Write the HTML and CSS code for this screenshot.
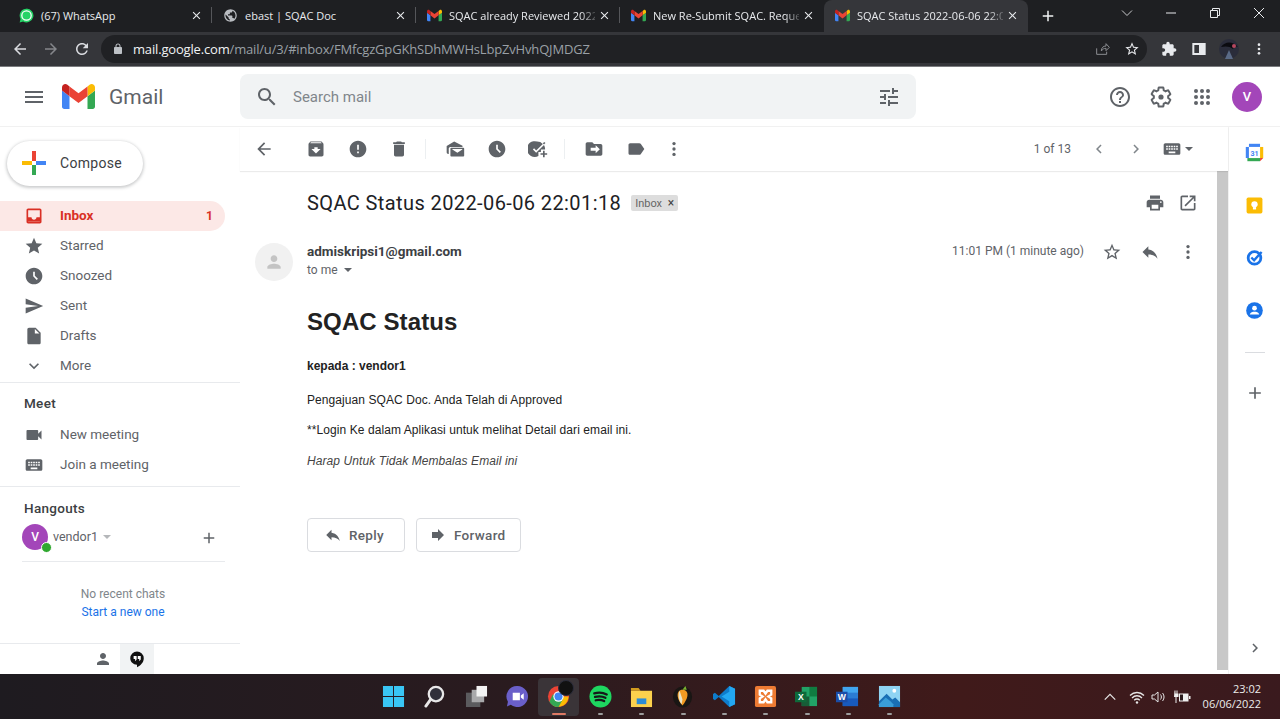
FILE: index.html
```html
<!DOCTYPE html>
<html lang="en">
<head>
  <meta charset="UTF-8">
  <title>SQAC Status 2022-06-06 22:01:18</title>
  <link rel="stylesheet" href="styles.css">
</head>
<body>
  <svg class="sprite" xmlns="http://www.w3.org/2000/svg">
    <symbol id="i-menu" viewBox="0 0 24 24"><path d="M3 18h18v-2H3v2zm0-5h18v-2H3v2zm0-7v2h18V6H3z"/></symbol>
    <symbol id="i-search" viewBox="0 0 24 24"><path d="M15.5 14h-.79l-.28-.27C15.41 12.59 16 11.11 16 9.5 16 5.91 13.09 3 9.5 3S3 5.91 3 9.5 5.91 16 9.5 16c1.61 0 3.09-.59 4.23-1.57l.27.28v.79l5 4.99L20.49 19l-4.99-5zm-6 0C7.01 14 5 11.99 5 9.5S7.01 5 9.5 5 14 7.01 14 9.5 11.99 14 9.5 14z"/></symbol>
    <symbol id="i-tune" viewBox="0 0 24 24"><path d="M3 17v2h6v-2H3zM3 5v2h10V5H3zm10 16v-2h8v-2h-8v-2h-2v6h2zM7 9v2H3v2h4v2h2V9H7zm14 4v-2H11v2h10zm-6-4h2V7h4V5h-4V3h-2v6z"/></symbol>
    <symbol id="i-help" viewBox="0 0 24 24"><path d="M11 18h2v-2h-2v2zm1-16C6.48 2 2 6.48 2 12s4.48 10 10 10 10-4.48 10-10S17.52 2 12 2zm0 18c-4.41 0-8-3.59-8-8s3.59-8 8-8 8 3.59 8 8-3.59 8-8 8zm0-14c-2.21 0-4 1.79-4 4h2c0-1.1.9-2 2-2s2 .9 2 2c0 2-3 1.75-3 5h2c0-2.25 3-2.5 3-5 0-2.21-1.79-4-4-4z"/></symbol>
    <symbol id="i-gear" viewBox="0 0 24 24"><path fill="none" stroke="currentColor" stroke-width="2" d="M19.14 12.94c.04-.3.06-.61.06-.94 0-.32-.02-.64-.07-.94l2.03-1.58c.18-.14.23-.41.12-.61l-1.92-3.32c-.12-.22-.37-.29-.59-.22l-2.39.96c-.5-.38-1.03-.7-1.62-.94l-.36-2.54c-.04-.24-.24-.41-.48-.41h-3.84c-.24 0-.43.17-.47.41l-.36 2.54c-.59.24-1.13.57-1.62.94l-2.39-.96c-.22-.08-.47 0-.59.22L2.74 8.87c-.12.21-.08.47.12.61l2.03 1.58c-.05.3-.09.63-.09.94s.02.64.07.94l-2.03 1.58c-.18.14-.23.41-.12.61l1.92 3.32c.12.22.37.29.59.22l2.39-.96c.5.38 1.03.7 1.62.94l.36 2.54c.05.24.24.41.48.41h3.84c.24 0 .44-.17.47-.41l.36-2.54c.59-.24 1.13-.56 1.62-.94l2.39.96c.22.08.47 0 .59-.22l1.92-3.32c.12-.22.07-.47-.12-.61l-2.01-1.58z"/><circle cx="12" cy="12" r="2.6"/></symbol>
    <symbol id="i-apps" viewBox="0 0 24 24"><circle cx="6" cy="6" r="2"/><circle cx="12" cy="6" r="2"/><circle cx="18" cy="6" r="2"/><circle cx="6" cy="12" r="2"/><circle cx="12" cy="12" r="2"/><circle cx="18" cy="12" r="2"/><circle cx="6" cy="18" r="2"/><circle cx="12" cy="18" r="2"/><circle cx="18" cy="18" r="2"/></symbol>
    <symbol id="i-back" viewBox="0 0 24 24"><path d="M20 11H7.83l5.59-5.59L12 4l-8 8 8 8 1.41-1.41L7.83 13H20v-2z"/></symbol>
    <symbol id="i-forward-arrow" viewBox="0 0 24 24"><path d="M4 13h12.17l-5.59 5.59L12 20l8-8-8-8-1.41 1.41L16.17 11H4v2z"/></symbol>
    <symbol id="i-refresh" viewBox="0 0 24 24"><path d="M17.65 6.35C16.2 4.9 14.21 4 12 4c-4.42 0-7.99 3.58-7.99 8s3.57 8 7.99 8c3.73 0 6.84-2.55 7.73-6h-2.08c-.82 2.33-3.04 4-5.65 4-3.31 0-6-2.69-6-6s2.69-6 6-6c1.66 0 3.14.69 4.22 1.78L13 11h7V4l-2.35 2.35z"/></symbol>
    <symbol id="i-archive" viewBox="0 0 24 24"><path d="M20.54 5.23l-1.39-1.68C18.88 3.21 18.47 3 18 3H6c-.47 0-.88.21-1.16.55L3.46 5.23C3.17 5.57 3 6.02 3 6.5V19c0 1.1.9 2 2 2h14c1.1 0 2-.9 2-2V6.5c0-.48-.17-.93-.46-1.27zM12 17.5L6.5 12H10v-2h4v2h3.5L12 17.5zM5.12 5l.81-1h12l.94 1H5.12z"/></symbol>
    <symbol id="i-report" viewBox="0 0 24 24"><path d="M12 2C6.48 2 2 6.48 2 12s4.48 10 10 10 10-4.48 10-10S17.52 2 12 2zm1 15h-2v-2h2v2zm0-4h-2V7h2v6z"/></symbol>
    <symbol id="i-delete" viewBox="0 0 24 24"><path d="M6 19c0 1.1.9 2 2 2h8c1.1 0 2-.9 2-2V7H6v12zM19 4h-3.5l-1-1h-5l-1 1H5v2h14V4z"/></symbol>
    <symbol id="i-unread" viewBox="0 0 24 24"><path fill-rule="evenodd" d="M2 8.5 11 3l10 5v1.500H6.500c-1.100 0-2 .9-2 2V18H4c-1.100 0-2-.9-2-2z"/><path fill-rule="evenodd" d="M7.500 10.500H22c.6 0 1 .4 1 1V20c0 .6-.4 1-1 1H7.500c-.6 0-1-.4-1-1v-8.500c0-.6.4-1 1-1zm1.300 2 6 4 6-4v-.4H8.800z"/></symbol>
    <symbol id="i-clock" viewBox="0 0 24 24"><path d="M11.99 2C6.47 2 2 6.48 2 12s4.47 10 9.99 10C17.52 22 22 17.52 22 12S17.52 2 11.99 2zm3.3 14.71L11 12.41V7h2v4.59l3.71 3.71-1.42 1.41z"/></symbol>
    <symbol id="i-addtask" viewBox="0 0 24 24"><path d="M11 3a9.500 9.500 0 0 1 6.800 2.900L9.800 13.700 7.300 11.200 5.900 12.600l3.900 3.900L19.200 7.200A9.500 9.500 0 0 1 20.500 12.500h-5v3h-3v5A9.500 9.500 0 1 1 11 3z"/><path d="M18 14h2v3h3v2h-3v3h-2v-3h-3v-2h3z"/><path d="M19.500 3.500l1.400 1.400-1.700 1.700-1.400-1.400z"/></symbol>
    <symbol id="i-move" viewBox="0 0 24 24"><path fill-rule="evenodd" d="M20 6h-8l-2-2H4c-1.100 0-2 .9-2 2v12c0 1.100.9 2 2 2h16c1.100 0 2-.9 2-2V8c0-1.100-.9-2-2-2zm-6 11v-3H8v-3.500h6v-3l5 4.750z"/></symbol>
    <symbol id="i-label" viewBox="0 0 24 24"><path d="M17.63 5.84C17.27 5.33 16.67 5 16 5L5 5.01C3.9 5.01 3 5.9 3 7v10c0 1.1.9 1.99 2 1.99L16 19c.67 0 1.27-.33 1.63-.84L22 12l-4.37-6.16z"/></symbol>
    <symbol id="i-more" viewBox="0 0 24 24"><circle cx="12" cy="5.500" r="2"/><circle cx="12" cy="12" r="2"/><circle cx="12" cy="18.500" r="2"/></symbol>
    <symbol id="i-inbox" viewBox="0 0 24 24"><path d="M19 3H5c-1.1 0-2 .9-2 2v14c0 1.1.9 2 2 2h14c1.1 0 2-.9 2-2V5c0-1.100-.9-2-2-2zm0 16H5v-.5h14zM19 13.500h-4c0 1.660-1.340 3-3 3s-3-1.340-3-3H5V5h14z"/></symbol>
    <symbol id="i-star" viewBox="0 0 24 24"><path d="M12 17.27L18.18 21l-1.64-7.03L22 9.24l-7.19-.61L12 2 9.19 8.63 2 9.24l5.46 4.73L5.82 21z"/></symbol>
    <symbol id="i-star-o" viewBox="0 0 24 24"><path d="M22 9.24l-7.19-.62L12 2 9.19 8.63 2 9.24l5.46 4.73L5.82 21 12 17.27 18.18 21l-1.63-7.03L22 9.24zM12 15.4l-3.76 2.27 1-4.28-3.32-2.88 4.38-.38L12 6.1l1.71 4.04 4.38.38-3.32 2.88 1 4.28L12 15.4z"/></symbol>
    <symbol id="i-send" viewBox="0 0 24 24"><path d="M2.01 21L23 12 2.01 3 2 10l15 2-15 2z"/></symbol>
    <symbol id="i-file" viewBox="0 0 24 24"><path d="M6 2c-1.1 0-1.99.9-1.99 2L4 20c0 1.1.89 2 1.99 2H18c1.1 0 2-.9 2-2V8l-6-6H6zm7 7V3.5L18.5 9H13z"/></symbol>
    <symbol id="i-expand" viewBox="0 0 24 24"><path d="M16.59 8.59L12 13.17 7.41 8.59 6 10l6 6 6-6z"/></symbol>
    <symbol id="i-video" viewBox="0 0 24 24"><path d="M17 10.5V7c0-.55-.45-1-1-1H4c-.55 0-1 .45-1 1v10c0 .55.45 1 1 1h12c.55 0 1-.45 1-1v-3.5l4 4v-11l-4 4z"/></symbol>
    <symbol id="i-keyboard" viewBox="0 0 24 24"><path d="M20 5H4c-1.1 0-1.99.9-1.99 2L2 17c0 1.1.9 2 2 2h16c1.1 0 2-.9 2-2V7c0-1.1-.9-2-2-2zm-9 3h2v2h-2V8zm0 3h2v2h-2v-2zM8 8h2v2H8V8zm0 3h2v2H8v-2zm-1 2H5v-2h2v2zm0-3H5V8h2v2zm9 7H8v-2h8v2zm0-4h-2v-2h2v2zm0-3h-2V8h2v2zm3 3h-2v-2h2v2zm0-3h-2V8h2v2z"/></symbol>
    <symbol id="i-reply" viewBox="0 0 24 24"><path d="M10 9V5l-7 7 7 7v-4.1c5 0 8.5 1.6 11 5.1-1-5-4-10-11-11z"/></symbol>
    <symbol id="i-fwd" viewBox="0 0 24 24"><path d="M12 8V4l8 8-8 8v-4H4V8z"/></symbol>
    <symbol id="i-print" viewBox="0 0 24 24"><path d="M19 8H5c-1.66 0-3 1.34-3 3v6h4v4h12v-4h4v-6c0-1.66-1.34-3-3-3zm-3 11H8v-5h8v5zm3-7c-.55 0-1-.45-1-1s.45-1 1-1 1 .45 1 1-.45 1-1 1zm-1-9H6v4h12V3z"/></symbol>
    <symbol id="i-open" viewBox="0 0 24 24"><path d="M19 19H5V5h7V3H5c-1.11 0-2 .9-2 2v14c0 1.1.89 2 2 2h14c1.1 0 2-.9 2-2v-7h-2v7zM14 3v2h3.59l-9.83 9.83 1.41 1.41L19 6.41V10h2V3h-7z"/></symbol>
    <symbol id="i-person" viewBox="0 0 24 24"><path d="M12 12c2.21 0 4-1.79 4-4s-1.79-4-4-4-4 1.79-4 4 1.79 4 4 4zm0 2c-2.67 0-8 1.34-8 4v2h16v-2c0-2.66-5.33-4-8-4z"/></symbol>
    <symbol id="i-left" viewBox="0 0 24 24"><path d="M15.41 7.41L14 6l-6 6 6 6 1.41-1.41L10.83 12z"/></symbol>
    <symbol id="i-right" viewBox="0 0 24 24"><path d="M10 6L8.59 7.41 13.17 12l-4.58 4.59L10 18l6-6z"/></symbol>
    <symbol id="i-add" viewBox="0 0 24 24"><path d="M19 13h-6v6h-2v-6H5v-2h6V5h2v6h6v2z"/></symbol>
    <symbol id="i-close" viewBox="0 0 24 24"><path d="M19 6.41L17.59 5 12 10.59 6.41 5 5 6.41 10.59 12 5 17.59 6.41 19 12 13.41 17.59 19 19 17.59 13.41 12z"/></symbol>
    <symbol id="i-lock" viewBox="0 0 24 24"><path d="M18 8h-1V6c0-2.76-2.24-5-5-5S7 3.24 7 6v2H6c-1.1 0-2 .9-2 2v10c0 1.1.9 2 2 2h12c1.1 0 2-.9 2-2V10c0-1.1-.9-2-2-2zM9 6c0-1.66 1.34-3 3-3s3 1.34 3 3v2H9V6z"/></symbol>
    <symbol id="i-share" viewBox="0 0 24 24"><path fill="none" stroke="currentColor" stroke-width="1.500" d="M4 11v9h15v-4M11 15c0-5 3-7.500 7-7.500V4l5 5.500-5 5v-3.500c-3 0-5 1-7 4z"/></symbol>
    <symbol id="i-ext" viewBox="0 0 24 24"><path d="M20.5 11H19V7c0-1.1-.9-2-2-2h-4V3.5C13 2.12 11.88 1 10.5 1S8 2.12 8 3.5V5H4c-1.1 0-1.99.9-1.99 2v3.8H3.5c1.49 0 2.7 1.21 2.7 2.7s-1.21 2.7-2.7 2.7H2V20c0 1.1.9 2 2 2h3.8v-1.5c0-1.49 1.21-2.7 2.7-2.7 1.49 0 2.7 1.21 2.7 2.7V22H17c1.1 0 2-.9 2-2v-4h1.5c1.38 0 2.5-1.12 2.500-2.500S21.88 11 20.5 11z"/></symbol>
    <symbol id="i-panel" viewBox="0 0 24 24"><path fill-rule="evenodd" d="M2 3h20v18H2zm3 3v12h7V6z"/></symbol>
    <symbol id="i-globe" viewBox="0 0 24 24"><path d="M12 2C6.48 2 2 6.48 2 12s4.48 10 10 10 10-4.48 10-10S17.52 2 12 2zm-1 17.93C7.05 19.44 4 16.08 4 12c0-.62.08-1.21.21-1.79L9 15v1c0 1.1.9 2 2 2v1.93zm6.9-2.54c-.26-.81-1-1.39-1.9-1.39h-1v-3c0-.55-.45-1-1-1H8v-2h2c.55 0 1-.45 1-1V7h2c1.1 0 2-.9 2-2v-.41c2.93 1.19 5 4.06 5 7.41 0 2.08-.8 3.97-2.1 5.39z"/></symbol>
    <symbol id="i-gmail" viewBox="52 42 88 66">
      <path fill="#4285f4" d="M58 108h14V74L52 59v43c0 3.32 2.69 6 6 6"/>
      <path fill="#34a853" d="M120 108h14c3.32 0 6-2.69 6-6V59l-20 15"/>
      <path fill="#fbbc04" d="M120 48v26l20-15v-8c0-7.42-8.47-11.65-14.4-7.2"/>
      <path fill="#ea4335" d="M72 74V48l24 18 24-18v26L96 92"/>
      <path fill="#c5221f" d="M52 51v8l20 15V48l-5.6-4.2c-5.94-4.45-14.4-.22-14.4 7.2"/>
    </symbol>
  </svg>

  <div class="tabstrip">
    <div class="tab">
      <svg class="favicon" viewBox="0 0 24 24"><path fill="#25d366" d="M12 1a11 11 0 1 1-5.500 20.500L1 23l1.500-5.500A11 11 0 0 1 12 1z"/><circle cx="12" cy="12" r="7.500" fill="none" stroke="#fff" stroke-width="2"/></svg>
      <span class="tab-title">(67) WhatsApp</span>
      <svg class="tab-x"><use href="#i-close"/></svg>
    </div>
    <div class="tab">
      <svg class="favicon favicon-globe"><use href="#i-globe"/></svg>
      <span class="tab-title">ebast | SQAC Doc</span>
      <svg class="tab-x"><use href="#i-close"/></svg>
    </div>
    <div class="tab">
      <svg class="favicon"><use href="#i-gmail"/></svg>
      <span class="tab-title tab-fade">SQAC already Reviewed 2022</span>
      <svg class="tab-x"><use href="#i-close"/></svg>
    </div>
    <div class="tab tab-before-active">
      <svg class="favicon"><use href="#i-gmail"/></svg>
      <span class="tab-title tab-fade">New Re-Submit SQAC. Reque</span>
      <svg class="tab-x"><use href="#i-close"/></svg>
    </div>
    <div class="tab tab-active">
      <svg class="favicon"><use href="#i-gmail"/></svg>
      <span class="tab-title tab-fade">SQAC Status 2022-06-06 22:0</span>
      <svg class="tab-x"><use href="#i-close"/></svg>
    </div>
    <svg class="newtab"><use href="#i-add"/></svg>
    <div class="winctl">
      <svg class="win-ic" viewBox="0 0 12 12"><path d="M1 3.500l5 5 5-5" fill="none" stroke="#c9cacc"/></svg>
      <svg class="win-ic" viewBox="0 0 12 12"><path d="M1 6h10" stroke="#e8eaed"/></svg>
      <svg class="win-ic" viewBox="0 0 12 12"><path d="M1.500 3.500h7v7h-7zM3.500 3.500v-2h7v7h-2" fill="none" stroke="#e8eaed"/></svg>
      <svg class="win-ic" viewBox="0 0 12 12"><path d="M1 1l10 10M11 1L1 11" stroke="#e8eaed"/></svg>
    </div>
  </div>

  <div class="toolbar">
    <svg class="nav-ic"><use href="#i-back"/></svg>
    <svg class="nav-ic nav-off"><use href="#i-forward-arrow"/></svg>
    <svg class="nav-ic"><use href="#i-refresh"/></svg>
    <div class="omnibox">
      <svg class="lock"><use href="#i-lock"/></svg>
      <span class="url"><b>mail.google.com</b>/mail/u/3/#inbox/FMfcgzGpGKhSDhMWHsLbpZvHvhQJMDGZ</span>
      <svg class="omni-ic omni-dim"><use href="#i-share"/></svg>
      <svg class="omni-ic"><use href="#i-star-o"/></svg>
    </div>
    <svg class="tool-ic"><use href="#i-ext"/></svg>
    <svg class="tool-ic"><use href="#i-panel"/></svg>
    <svg class="profile" viewBox="0 0 20 20"><circle cx="10" cy="10" r="10" fill="#2a2c3a"/><path d="M2 8c4-6 12-6 17 0-3-1-4 0-5 2-3-3-8-3-12-2z" fill="#0b0b10"/><circle cx="15" cy="7" r="2" fill="#b5475f"/><path d="M6 20l4-9 4 9z" fill="#5a6a86"/></svg>
    <svg class="tool-ic tool-more"><use href="#i-more"/></svg>
  </div>

  <header class="gm-header">
    <div class="brand">
      <svg class="burger"><use href="#i-menu"/></svg>
      <svg class="gm-logo"><use href="#i-gmail"/></svg>
      <span class="gm-word">Gmail</span>
    </div>
    <div class="searchbox">
      <svg class="search-ic"><use href="#i-search"/></svg>
      <span class="search-text">Search mail</span>
      <svg class="search-ic"><use href="#i-tune"/></svg>
    </div>
    <div class="gm-actions">
      <svg class="act-ic"><use href="#i-help"/></svg>
      <svg class="act-ic"><use href="#i-gear"/></svg>
      <svg class="act-ic"><use href="#i-apps"/></svg>
      <div class="acct">V</div>
    </div>
  </header>

  <div class="gm-main">
    <aside class="sidebar">
      <button class="compose">
        <svg class="compose-plus" viewBox="0 0 24 24">
          <path fill="#ea4335" d="M10 0h4v10h-4z"/>
          <path fill="#4285f4" d="M14 10h10v4H14z"/>
          <path fill="#34a853" d="M10 14h4v10h-4z"/>
          <path fill="#fbbc04" d="M0 10h10v4H0z"/>
        </svg>
        Compose
      </button>
      <ul class="navlist">
        <li class="navrow navrow-on"><svg class="nav-svg"><use href="#i-inbox"/></svg><span class="navname">Inbox</span><span class="navcount">1</span></li>
        <li class="navrow"><svg class="nav-svg"><use href="#i-star"/></svg><span class="navname">Starred</span></li>
        <li class="navrow"><svg class="nav-svg"><use href="#i-clock"/></svg><span class="navname">Snoozed</span></li>
        <li class="navrow"><svg class="nav-svg"><use href="#i-send"/></svg><span class="navname">Sent</span></li>
        <li class="navrow"><svg class="nav-svg"><use href="#i-file"/></svg><span class="navname">Drafts</span></li>
        <li class="navrow"><svg class="nav-svg"><use href="#i-expand"/></svg><span class="navname">More</span></li>
      </ul>
      <section class="meet">
        <h3 class="side-head">Meet</h3>
        <div class="navrow"><svg class="nav-svg"><use href="#i-video"/></svg><span class="navname">New meeting</span></div>
        <div class="navrow"><svg class="nav-svg nav-svg-wide"><use href="#i-keyboard"/></svg><span class="navname">Join a meeting</span></div>
      </section>
      <section class="hangouts">
        <h3 class="side-head">Hangouts</h3>
        <div class="hang-user">
          <div class="hang-avatar">V<span class="online"></span></div>
          <span class="hang-name">vendor1</span>
          <span class="caret caret-light"></span>
          <svg class="hang-add"><use href="#i-add"/></svg>
        </div>
        <div class="hang-empty">
          <div>No recent chats</div>
          <a class="hang-link">Start a new one</a>
        </div>
      </section>
      <div class="hang-tabs">
        <div class="hang-tab"><svg class="hang-ic hang-ic-person"><use href="#i-person"/></svg></div>
        <div class="hang-tab hang-tab-on">
          <svg class="hang-ic" viewBox="0 0 24 24"><path fill="#111" d="M12 2a9 9 0 0 0-9 9c0 5 4 8.500 9 8.500V23c5-2.500 9-6.500 9-12a9 9 0 0 0-9-9z"/><path fill="#fff" d="M7.500 8h4v4.500l-2 2.500v-3h-2zM13 8h4v4.500l-2 2.500v-3h-2z"/></svg>
        </div>
      </div>
    </aside>

    <main class="content">
      <div class="mail-tools">
        <button class="tb tb-back"><svg><use href="#i-back"/></svg></button>
        <button class="tb"><svg><use href="#i-archive"/></svg></button>
        <button class="tb"><svg><use href="#i-report"/></svg></button>
        <button class="tb"><svg><use href="#i-delete"/></svg></button>
        <span class="tb-sep"></span>
        <button class="tb"><svg><use href="#i-unread"/></svg></button>
        <button class="tb"><svg><use href="#i-clock"/></svg></button>
        <button class="tb"><svg><use href="#i-addtask"/></svg></button>
        <span class="tb-sep"></span>
        <button class="tb"><svg><use href="#i-move"/></svg></button>
        <button class="tb"><svg><use href="#i-label"/></svg></button>
        <button class="tb tb-more"><svg><use href="#i-more"/></svg></button>
        <div class="pager">
          <span class="pager-text">1 of 13</span>
          <svg class="pager-ic"><use href="#i-left"/></svg>
          <svg class="pager-ic"><use href="#i-right"/></svg>
          <svg class="pager-kbd"><use href="#i-keyboard"/></svg>
          <span class="caret"></span>
        </div>
      </div>
      <div class="mail-scroll">
        <article class="mail">
          <div class="subject-row">
            <h2 class="subject">SQAC Status 2022-06-06 22:01:18</h2>
            <span class="chip">Inbox <span class="chip-x">×</span></span>
            <svg class="subj-ic subj-print"><use href="#i-print"/></svg>
            <svg class="subj-ic"><use href="#i-open"/></svg>
          </div>
          <div class="sender-row">
            <div class="sender-avatar"><svg><use href="#i-person"/></svg></div>
            <div class="sender-info">
              <div class="sender-mail">admiskripsi1@gmail.com</div>
              <div class="sender-to">to me <span class="caret"></span></div>
            </div>
            <span class="sent-time">11:01 PM (1 minute ago)</span>
            <svg class="msg-ic"><use href="#i-star-o"/></svg>
            <svg class="msg-ic"><use href="#i-reply"/></svg>
            <svg class="msg-ic"><use href="#i-more"/></svg>
          </div>
          <div class="mail-body">
            <h1 class="body-title">SQAC Status</h1>
            <p class="body-to">kepada : vendor1</p>
            <p class="body-line">Pengajuan SQAC Doc. Anda Telah di Approved</p>
            <p class="body-line">**Login Ke dalam Aplikasi untuk melihat Detail dari email ini.</p>
            <p class="body-line body-note">Harap Untuk Tidak Membalas Email ini</p>
          </div>
          <div class="mail-btns">
            <button class="mbtn mbtn-reply"><svg><use href="#i-reply"/></svg>Reply</button>
            <button class="mbtn mbtn-fwd"><svg><use href="#i-fwd"/></svg>Forward</button>
          </div>
        </article>
        <div class="scrollbar"></div>
      </div>
    </main>

    <aside class="rail">
      <svg class="rail-ic" viewBox="0 0 24 24"><path fill="#4285f4" d="M5 1h14v4H5z"/><path fill="#4285f4" d="M1 5h4v14H1z"/><path fill="#fbbc04" d="M19 5h4v14h-4z"/><path fill="#34a853" d="M3 19h16v4H3z"/><path fill="#ea4335" d="M19 19h4l-4 4z"/><path fill="#fff" d="M5 5h14v14H5z"/><text x="12" y="16" class="cal-num">31</text></svg>
      <svg class="rail-ic" viewBox="0 0 24 24"><rect x="2" y="2" width="20" height="20" rx="2" fill="#fbbc04"/><circle cx="12" cy="10.500" r="4" fill="#fff"/><path fill="#fff" d="M10 14h4v3h-4z"/></svg>
      <svg class="rail-ic" viewBox="0 0 24 24"><circle cx="12" cy="12.500" r="8" fill="none" stroke="#1a73e8" stroke-width="3.500"/><path fill="none" stroke="#1a73e8" stroke-width="3" d="M8 12l3.500 3.500L21 5"/></svg>
      <svg class="rail-ic" viewBox="0 0 24 24"><circle cx="12" cy="12" r="10.500" fill="#1a73e8"/><circle cx="12" cy="9" r="3" fill="#fff"/><path fill="#fff" d="M6 17c1-3 3.500-3.500 6-3.500s5 .5 6 3.500z"/></svg>
      <span class="rail-sep"></span>
      <svg class="rail-add"><use href="#i-add"/></svg>
      <svg class="rail-chev"><use href="#i-right"/></svg>
    </aside>
  </div>

  <footer class="taskbar">
    <div class="task-apps">
      <div class="app"><svg viewBox="0 0 24 24"><path fill="#39c6f4" d="M1 1h10.500v10.500H1zM12.500 1H23v10.500H12.500zM1 12.500h10.500V23H1zM12.500 12.500H23V23H12.500z"/></svg></div>
      <div class="app"><svg viewBox="0 0 24 24"><circle cx="13.500" cy="9.500" r="7.500" fill="#30303a" stroke="#e8e8e8" stroke-width="2.400"/><path stroke="#e8e8e8" stroke-width="3" stroke-linecap="round" d="M8 15l-5 7"/></svg></div>
      <div class="app"><svg viewBox="0 0 24 24"><path fill="#5b5b5e" d="M1 8h15v15H1z"/><path fill="#a9a9ab" d="M7 5h13v13H7z"/><path fill="#f3f3f3" d="M12 1h11v11H12z"/></svg></div>
      <div class="app"><svg viewBox="0 0 24 24"><path fill="#6a5fc9" d="M12 1a11 11 0 1 1-7 19.500L1 22.500l1-5A11 11 0 0 1 12 1z"/><path fill="#fff" d="M7 8h7.500v8H7zM15.500 11l3-2.500v7l-3-2.500z"/></svg></div>
      <div class="app app-on">
        <svg viewBox="0 0 24 24"><circle cx="12" cy="12" r="11" fill="#ea4335"/><path fill="#fbbc04" d="M12 12l10.500 0A11 11 0 0 1 6 21.300z"/><path fill="#34a853" d="M12 23a11 11 0 0 1-9.500-5.500L6 10l6 2 5 2z"/><circle cx="12" cy="12" r="5.400" fill="#fff"/><circle cx="12" cy="12" r="4.200" fill="#4285f4"/></svg>
        <span class="app-badge"></span>
        <span class="app-dot app-dot-on"></span>
      </div>
      <div class="app"><svg viewBox="0 0 24 24"><circle cx="12" cy="12" r="11.500" fill="#1ed760"/><path fill="none" stroke="#16181a" stroke-width="2.400" stroke-linecap="round" d="M5.500 8.700c4.500-1.300 9-1 13 1.200M6.300 12.400c3.800-1 7.500-.8 10.800 1M7 15.900c3-.8 6-.6 8.800.9"/></svg><span class="app-dot"></span></div>
      <div class="app"><svg viewBox="0 0 24 24"><path fill="#d39c1f" d="M1 3h8l2 3h-10z"/><path fill="#fcd14d" d="M1 6h22v17H1z"/><path fill="#2c8cd6" d="M7 14h10v6H7z"/></svg><span class="app-dot"></span></div>
      <div class="app"><svg viewBox="0 0 24 24"><ellipse cx="12" cy="12.500" rx="10" ry="11" fill="#191614"/><path fill="#f29a22" d="M12 5c3.500 0 6 2.500 5 7-.6 3-2.300 6-5 9.500-2.500-3-4.500-6-5-9.500C6.500 7.500 8.500 5 12 5z"/><path fill="#e9e4c8" d="M9 6l3 9-1 5c-3-3.500-4-10-2-14z"/><path fill="#7db32f" d="M12 5l3-4 1.500 4z"/></svg><span class="app-dot"></span></div>
      <div class="app"><svg viewBox="0 0 24 24"><path fill="#0e7ccb" d="M17 1l6 3v16l-6 3-11-10.500L2 16l-2-1.500v-5L2 8l4 3.500z"/><path fill="#23a8f2" d="M17 1l6 3v16l-6 3V7L9 12l8 5z"/></svg><span class="app-dot"></span></div>
      <div class="app"><svg viewBox="0 0 24 24"><rect x="1" y="1" width="22" height="22" rx="2" fill="#ed7b33"/><path fill="none" stroke="#fff" stroke-width="2.400" d="M6 6h4l2 3 2-3h4v4l-3 2 3 2v4h-4l-2-3-2 3H6v-4l3-2-3-2z"/></svg><span class="app-dot"></span></div>
      <div class="app"><svg viewBox="0 0 24 24"><path fill="#21a366" d="M7 2h16v20H7z"/><path fill="#107c41" d="M15 2h8v10h-8z"/><path fill="#185c37" d="M7 12h8v10H7z"/><path fill="#0e6a3a" d="M0 7h12v11H0z"/><text x="6" y="16" class="app-letter">X</text></svg><span class="app-dot"></span></div>
      <div class="app"><svg viewBox="0 0 24 24"><path fill="#2b7cd3" d="M7 2h16v20H7z"/><path fill="#41a5ee" d="M7 2h16v6H7z"/><path fill="#185abd" d="M7 14h16v8H7z"/><path fill="#1a4da8" d="M0 7h12v11H0z"/><text x="6" y="16" class="app-letter">W</text></svg><span class="app-dot"></span></div>
      <div class="app"><svg viewBox="0 0 24 24"><path fill="#8fd4f3" d="M1 1h22v22H1z"/><path fill="#1a6fb5" d="M1 17l8-8 6 6 3-2 5 5v5H1z"/><path fill="#3a9dd8" d="M1 23v-3l7-7 5 4 3 3v3z"/><circle cx="17" cy="6" r="2" fill="#fff"/></svg><span class="app-dot"></span></div>
    </div>
    <div class="tray">
      <svg class="tray-ic tray-up" viewBox="0 0 16 16"><path d="M2 11l6-6 6 6" fill="none" stroke="#e6e6e6" stroke-width="1.400"/></svg>
      <svg class="tray-ic" viewBox="0 0 16 16"><path d="M1 6.500c4-4 10-4 14 0M3 9c3-3 7-3 10 0M5.200 11.200c1.600-1.600 4-1.600 5.600 0" fill="none" stroke="#e6e6e6" stroke-width="1.300"/><circle cx="8" cy="13.500" r="1.200" fill="#e6e6e6"/></svg>
      <svg class="tray-ic" viewBox="0 0 16 16"><path d="M1 6h2.500L7 3v10L3.500 10H1zM9.500 5.500c1.200 1.500 1.200 3.500 0 5M11.500 4c2 2.500 2 5.500 0 8" fill="none" stroke="#e6e6e6"/></svg>
      <svg class="tray-ic tray-batt" viewBox="0 0 18 16"><path fill="#f0f0f0" d="M6 4.500h9.500v8H6z"/><path fill="#f0f0f0" d="M16 7h1.500v3H16zM1.500 1.500h1v3h1v-3h1v3h1V8H3.500v6h-1V8H1z"/><path fill="#2a1a1c" d="M7 5.500h3v6H7z"/></svg>
      <div class="clock"><div>23:02</div><div>06/06/2022</div></div>
    </div>
  </footer>
</body>
</html>
```

FILE: styles.css
```css
* { box-sizing: border-box; }
html, body { height: 100%; }
body {
  margin: 0;
  height: 719px;
  overflow: hidden;
  display: flex;
  flex-direction: column;
  font-family: Roboto, "Liberation Sans", sans-serif;
  background: #fff;
  color: #202124;
}
svg { display: block; fill: currentColor; flex: none; }
button { font: inherit; background: none; border: 0; padding: 0; color: inherit; }
h1, h2, h3, p, ul { margin: 0; padding: 0; }
ul { list-style: none; }
.sprite { width: 0; height: 0; overflow: hidden; position: absolute; }

/* browser tabs */
.tabstrip {
  height: 32px;
  flex: none;
  display: flex;
  align-items: stretch;
  padding-left: 8px;
  background: #1e1f22;
  font-family: "Open Sans", sans-serif;
  color: #e8eaed;
}
.tab {
  width: 204px;
  display: flex;
  align-items: center;
  padding: 0 9px 2px 11px;
  font-size: 11px;
  position: relative;
}
.tab::after {
  content: "";
  position: absolute;
  right: 0;
  top: 7px;
  bottom: 9px;
  width: 1px;
  background: #55565a;
}
.tab-before-active::after, .tab-active::after { display: none; }
.tab-active {
  background: #35363a;
  border-radius: 8px 8px 0 0;
}
.favicon { width: 15px; height: 15px; margin-right: 7px; }
.favicon-globe { color: #b9bcc1; }
.tab-title {
  flex: 1;
  min-width: 0;
  white-space: nowrap;
}
.tab-fade {
  -webkit-mask-image: linear-gradient(to right, #000 90%, rgba(0,0,0,.25));
  mask-image: linear-gradient(to right, #000 90%, rgba(0,0,0,.25));
}
.tab-x { width: 13px; height: 13px; margin-left: 3px; color: #e8eaed; }
.newtab { width: 18px; height: 18px; margin: 7px 0 0 11px; color: #f1f3f4; }
.winctl { margin-left: auto; display: flex; align-items: flex-start; padding: 7px 15px 0 0; gap: 32px; }
.win-ic { width: 12px; height: 12px; }

/* address bar */
.toolbar {
  height: 35px;
  flex: none;
  display: flex;
  align-items: center;
  background: #35363a;
  border-bottom: 1px solid #7b7c7f;
  color: #dadce0;
  padding: 0 11px 1px 11px;
}
.nav-ic { width: 18px; height: 18px; margin-right: 13px; }
.nav-off { color: #85878b; }
.omnibox {
  width: 1046px;
  height: 28px;
  margin-left: -3px;
  display: flex;
  align-items: center;
  padding: 0 7px 0 11px;
  background: #202124;
  border-radius: 14px;
}
.lock { width: 12px; height: 12px; color: #bdc1c6; margin-right: 9px; }
.url { flex: 1; font: 13px "Open Sans", sans-serif; color: #9aa0a6; letter-spacing: -.17px; white-space: nowrap; }
.url b { font-weight: 400; color: #f1f3f4; }
.omni-ic { width: 16px; height: 16px; margin-left: 14px; color: #e8eaed; }
.omni-dim { color: #8b8d91; }
.tool-ic { width: 16px; height: 16px; margin-left: 14px; color: #e8eaed; }
.profile { width: 20px; height: 20px; margin-left: 12px; }
.tool-more { margin-left: 12px; }

/* gmail header */
.gm-header {
  height: 60px;
  flex: none;
  display: flex;
  align-items: center;
  border-bottom: 1px solid #f1f1f1;
}
.brand { width: 240px; flex: none; display: flex; align-items: center; padding-left: 22px; color: #5f6368; }
.burger { width: 24px; height: 24px; }
.gm-logo { width: 33px; height: 25px; margin-left: 16px; }
.gm-word { margin-left: 14px; font-size: 21px; color: #5f6368; }
.searchbox {
  width: 676px;
  height: 45px;
  flex: none;
  display: flex;
  align-items: center;
  padding: 0 15px;
  background: #f1f3f4;
  border-radius: 8px;
  color: #5f6368;
}
.search-ic { width: 24px; height: 24px; }
.search-text { flex: 1; margin-left: 14px; font-size: 15px; color: #80868b; }
.gm-actions { flex: 1; display: flex; align-items: center; padding-left: 192px; color: #5f6368; }
.act-ic { width: 24px; height: 24px; margin-right: 17px; }
.acct {
  width: 30px;
  height: 30px;
  margin-left: 1px;
  border-radius: 50%;
  background: #a346b9;
  color: #fff;
  font-size: 13px;
  font-weight: 500;
  display: flex;
  align-items: center;
  justify-content: center;
}

/* main area */
.gm-main { flex: 1; min-height: 0; display: flex; }
.sidebar { width: 240px; flex: none; display: flex; flex-direction: column; color: #5f6368; }
.compose {
  width: 136px;
  height: 45px;
  margin: 14px 0 15px 7px;
  display: flex;
  align-items: center;
  gap: 14px;
  padding: 0 0 2px 15px;
  border-radius: 23px;
  background: #fff;
  box-shadow: 0 1px 3px 1px rgba(60,64,67,.25);
  font-size: 14px;
  letter-spacing: .3px;
  color: #3c4043;
}
.compose-plus { width: 24px; height: 24px; }
.navlist { border-bottom: 1px solid #e8eaed; padding-bottom: 1px; }
.navrow { height: 30px; display: flex; align-items: center; padding-left: 24px; width: 225px; font-size: 13.5px; color: #5f6368; }
.navrow-on { background: #fce8e6; border-radius: 0 15px 15px 0; color: #d93025; font-weight: 700; }
.nav-svg { width: 20px; height: 20px; margin-right: 16px; }
.nav-svg-wide { width: 22px; margin: 0 15px 0 -1px; }
.navname { flex: 1; padding-bottom: 2px; }
.navcount { font-size: 12px; padding-right: 12px; }
.side-head { font-size: 13.5px; font-weight: 500; color: #3c4043; padding-left: 24px; letter-spacing: .3px; }
.meet { padding-top: 12px; height: 104px; border-bottom: 1px solid #e8eaed; }
.meet .side-head { height: 24px; line-height: 17px; margin-bottom: 1px; }
.hangouts { flex: 1; padding-top: 13px; }
.hangouts .side-head { height: 22px; line-height: 17px; }
.hang-user { margin: 0 15px 0 22px; height: 40px; display: flex; align-items: flex-start; border-bottom: 1px solid #e8eaed; }
.hang-avatar {
  position: relative;
  width: 26px;
  height: 26px;
  margin-top: 2px;
  border-radius: 50%;
  background: #a346b9;
  color: #fff;
  font-size: 12px;
  font-weight: 500;
  display: flex;
  align-items: center;
  justify-content: center;
}
.online {
  position: absolute;
  right: -4px;
  bottom: -3px;
  width: 11px;
  height: 11px;
  border-radius: 50%;
  background: #2fa82f;
  border: 1px solid #fff;
}
.hang-name { margin: 5px 5px 0 5px; font-size: 12.5px; line-height: 20px; color: #5f6368; }
.caret { display: inline-block; width: 0; height: 0; border: 4px solid transparent; border-top: 4px solid #5f6368; border-bottom: 0; vertical-align: 2px; }
.caret-light { border-top-color: #b5b7ba; margin-top: 13px; }
.hang-add { width: 18px; height: 18px; margin: 7px 7px 0 auto; color: #5f6368; }
.hang-empty { padding-top: 23px; width: 246px; text-align: center; font-size: 12px; line-height: 18px; color: #80868b; }
.hang-link { color: #1a73e8; }
.hang-tabs { height: 31px; flex: none; display: flex; justify-content: center; border-top: 1px solid #e8eaed; }
.hang-tab { width: 34px; display: flex; align-items: center; justify-content: center; }
.hang-tab-on { background: #f1f3f4; }
.hang-ic { width: 18px; height: 18px; }
.hang-ic-person { color: #5f6368; }

/* message */
.content { flex: 1; min-width: 0; display: flex; flex-direction: column; }
.mail-tools {
  height: 44px;
  flex: none;
  display: flex;
  align-items: center;
  box-shadow: 0 1px 1px rgba(0,0,0,.08);
  color: #5f6368;
  padding-right: 35px;
  position: relative;
}
.tb { width: 41.5px; height: 28px; display: flex; align-items: center; justify-content: center; }
.tb svg { width: 20px; height: 20px; }
.tb-back { width: 48px; margin-right: 7.5px; }
.tb-sep { width: 1px; height: 20px; background: #eceff1; margin: 0 8.5px 0 5px; }
.tb-more { width: 34px; }
.pager { margin-left: auto; display: flex; align-items: center; }
.pager-text { font-size: 12px; color: #5f6368; margin-right: 19px; }
.pager-ic { width: 18px; height: 18px; margin-right: 19px; color: #80868b; }
.pager-kbd { width: 20px; height: 20px; margin-left: -2px; margin-right: 3px; }
.pager .caret { border-top-color: #5f6368; border-width: 4px; }
.mail-scroll { flex: 1; min-height: 0; display: flex; }
.mail { flex: 1; min-width: 0; }
.scrollbar { width: 11px; height: 499px; background: #c8c8c8; }
.subject-row { display: flex; align-items: center; height: 32px; margin-top: 16px; padding: 0 19px 0 67px; }
.subject { font-size: 20px; font-weight: 400; color: #202124; letter-spacing: .4px; white-space: nowrap; }
.chip {
  margin-left: 10px;
  padding: 0 4px;
  width: 47px;
  height: 16px;
  display: flex;
  align-items: center;
  justify-content: space-between;
  border-radius: 2px;
  background: #dddddd;
  font-size: 11px;
  color: #666;
}
.chip-x { font-size: 12px; color: #444; }
.subj-ic { width: 20px; height: 20px; color: #5f6368; margin-left: 13px; }
.subj-print { margin-left: auto; }
.sender-row { display: flex; align-items: flex-start; height: 73px; padding: 9px 19px 0 15px; margin-top: 15px; }
.sender-avatar {
  width: 38px;
  height: 38px;
  margin: 0 14px 0 0;
  border-radius: 50%;
  background: #f1f1f1;
  color: #c4c4c4;
  display: flex;
  align-items: center;
  justify-content: center;
}
.sender-avatar svg { width: 20px; height: 20px; }
.sender-mail { font-size: 13.5px; font-weight: 700; color: #3c4043; line-height: 17px; }
.sender-to { font-size: 12px; color: #5f6368; margin-top: 2px; line-height: 16px; }
.sender-to .caret { margin-left: 3px; }
.sent-time { margin-left: auto; font-size: 12px; color: #5f6368; line-height: 17px; }
.msg-ic { width: 20px; height: 20px; color: #5f6368; margin: -1px 0 0 18px; }
.mail-body { padding-left: 67px; font-family: "Liberation Sans", Arial, sans-serif; font-size: 12px; color: #222; }
.body-title { font-size: 24px; font-weight: 700; line-height: 29px; letter-spacing: .1px; }
.body-to { font-weight: 700; margin-top: 23px; line-height: 15px; }
.body-line { margin-top: 19px; line-height: 15px; letter-spacing: .08px; }
.body-line + .body-line { margin-top: 15px; }
.body-line + .body-note { margin-top: 16px; }
.body-note { font-style: italic; color: #444; }
.mail-btns { display: flex; gap: 11px; margin: 49px 0 0 67px; }
.mbtn {
  height: 34px;
  display: flex;
  align-items: center;
  gap: 7px;
  border: 1px solid #dadce0;
  border-radius: 4px;
  font-size: 13.5px;
  font-weight: 500;
  letter-spacing: .3px;
  color: #5f6368;
}
.mbtn svg { width: 18px; height: 18px; }
.mbtn-reply { width: 98px; padding-left: 16px; }
.mbtn-fwd { width: 105px; padding-left: 12px; }

/* right rail */
.rail { width: 52px; flex: none; display: flex; flex-direction: column; align-items: center; border-left: 1px solid #f1f1f1; padding-top: 16px; }
.rail-ic { width: 19px; height: 19px; margin-bottom: 33.7px; }
.cal-num { font: 700 9px Roboto, sans-serif; fill: #4285f4; text-anchor: middle; }
.rail-sep { width: 20px; height: 1px; background: #dadce0; margin: -2px 0 30px; }
.rail-add { width: 20px; height: 20px; color: #5f6368; }
.rail-chev { width: 18px; height: 18px; margin-top: auto; margin-bottom: 17px; color: #5f6368; }

/* taskbar */
.taskbar {
  height: 45px;
  flex: none;
  display: flex;
  align-items: center;
  background: linear-gradient(90deg, #1e1b20 0%, #2a1b1f 40%, #401a1a 75%, #3a1a1e 100%);
  color: #eee;
  position: relative;
}
.task-apps { display: flex; margin-left: 373px; }
.app {
  position: relative;
  width: 41.3px;
  height: 38px;
  display: flex;
  align-items: center;
  justify-content: center;
  border-radius: 4px;
}
.app svg { width: 23px; height: 23px; }
.app-on { background: #3a3438; }
.app-badge { position: absolute; top: 2px; right: 5px; width: 16px; height: 16px; border-radius: 50%; background: #111; border: 1px solid #2a2c3a; }
.app-dot { position: absolute; left: 50%; bottom: 1px; width: 5px; height: 2px; margin-left: -2px; border-radius: 1px; background: #9d9d9d; }
.app-dot-on { width: 14px; margin-left: -7px; background: #e07a65; }
.app-letter { font: 700 9px "Liberation Sans", sans-serif; fill: #fff; text-anchor: middle; }
.tray { margin-left: auto; display: flex; align-items: center; padding-right: 19px; }
.tray-ic { width: 16px; height: 16px; margin-right: 6px; }
.tray-up { width: 14px; margin-right: 12px; }
.tray-batt { width: 18px; margin: 0; }
.clock { margin: -2px 0 0 12px; text-align: right; font: 11px/15px "Open Sans", sans-serif; color: #ececec; }
```
